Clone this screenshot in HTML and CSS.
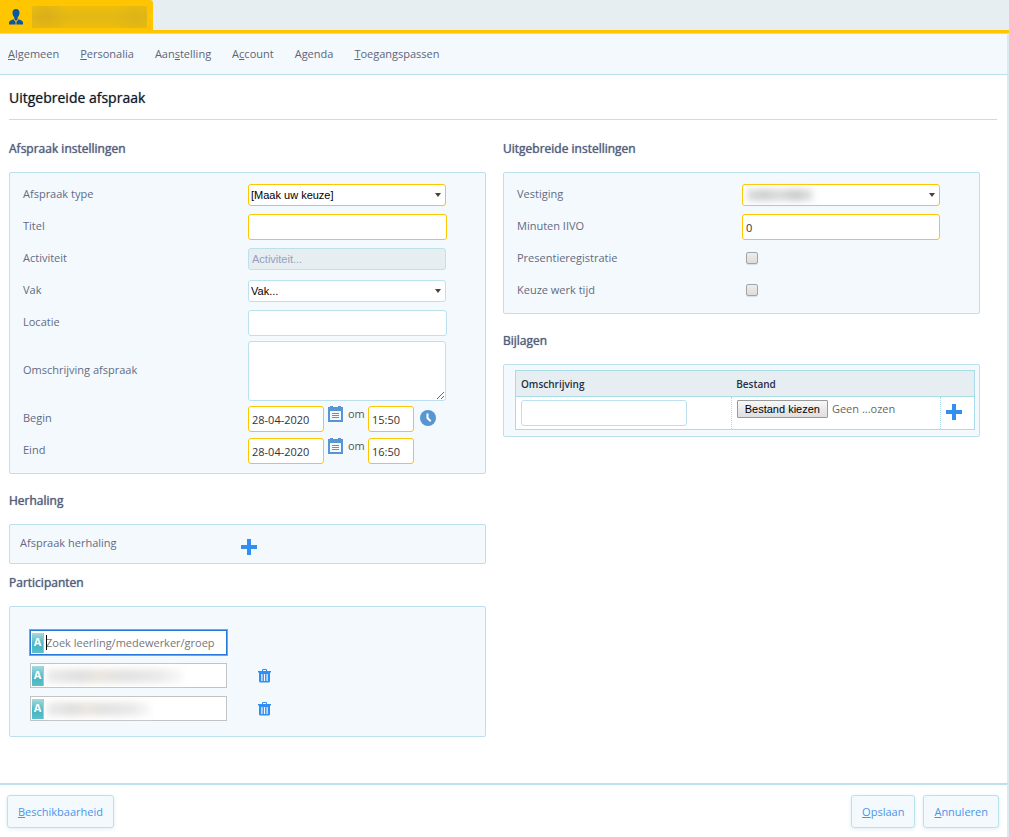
FILE: index.html
```html
<!DOCTYPE html>
<html lang="nl">
<head>
<meta charset="utf-8">
<title>Uitgebreide afspraak</title>
<link rel="stylesheet" href="styles.css">
</head>
<body>
<svg class="defs" aria-hidden="true">
  <symbol id="calendar" viewBox="0 0 15 16"><path fill-rule="evenodd" d="M0 1h2V0h3v1h5V0h3v1h2v15H0zM2 5v9h11V5z"/><path d="M4 7h7v1H4zM4 9h7v1H4zM4 11h7v1H4z"/></symbol>
  <symbol id="plus" viewBox="0 0 16 16"><path d="M6 0h4v6h6v4h-6v6H6v-6H0V6h6z"/></symbol>
  <symbol id="trash" viewBox="0 0 13 14"><path fill-rule="evenodd" d="M4 2V1Q4 0 5 0h3q1 0 1 1v1h4v1.500h-1V12q0 1.500-1.500 1.500h-8Q1 13.500 1 12V3.500H0V2zM5 1v1h3V1zM3.300 5v7h1.200V5zM5.900 5v7h1.200V5zM8.500 5v7h1.200V5z"/></symbol>
</svg>
<div class="page">
  <header class="tabs">
    <div class="tab">
      <svg class="person" viewBox="0 0 14 16"><path d="M7 0c2.300 0 3.500 1.600 3.500 3.800C10.500 6 9.600 7.300 8.700 8.300V10L7 12 5.300 10V8.300C4.400 7.300 3.500 6 3.500 3.800 3.500 1.600 4.700 0 7 0zM4.500 10.200L6.600 13v2.500H0v-1.700q0-1.800 2-2.500zM9.500 10.200L7.400 13v2.500H14v-1.700q0-1.800-2-2.500z"/></svg>
      <span class="tab-name"></span>
    </div>
  </header>
  <nav class="menu">
    <a href="#"><u>A</u>lgemeen</a>
    <a href="#"><u>P</u>ersonalia</a>
    <a href="#">Aan<u>s</u>telling</a>
    <a href="#">A<u>c</u>count</a>
    <a href="#">Agenda</a>
    <a href="#"><u>T</u>oegangspassen</a>
  </nav>
  <main class="content">
    <h1 class="title">Uitgebreide afspraak</h1>
    <div class="columns">
      <div class="column">
        <h2 class="heading">Afspraak instellingen</h2>
        <section class="panel form">
          <div class="row"><label for="type">Afspraak type</label><div class="select required"><select id="type"><option>[Maak uw keuze]</option></select></div></div>
          <div class="row"><label for="titel">Titel</label><input class="text required" id="titel" type="text"></div>
          <div class="row"><label for="act">Activiteit</label><input class="text short" id="act" type="text" placeholder="Activiteit..." disabled></div>
          <div class="row"><label for="vak">Vak</label><div class="select"><select id="vak"><option>Vak...</option></select></div></div>
          <div class="row"><label for="loc">Locatie</label><input class="text" id="loc" type="text"></div>
          <div class="row tall"><label for="oms">Omschrijving afspraak</label><textarea class="area" id="oms"></textarea></div>
          <div class="row"><label for="begin">Begin</label>
            <div class="moment"><input class="text required date" id="begin" type="text" value="28-04-2020"><svg class="calendar"><use href="#calendar"/></svg><span>om</span><input class="text required time" type="text" value="15:50" aria-label="Begintijd"><svg class="clock" viewBox="0 0 16 16"><circle cx="8" cy="8" r="8"/><path d="M7.500 3.500V8l3.200 3.200"/></svg></div></div>
          <div class="row"><label for="eind">Eind</label>
            <div class="moment"><input class="text required date" id="eind" type="text" value="28-04-2020"><svg class="calendar"><use href="#calendar"/></svg><span>om</span><input class="text required time" type="text" value="16:50" aria-label="Eindtijd"></div></div>
        </section>
        <h2 class="heading">Herhaling</h2>
        <section class="panel repeat"><span>Afspraak herhaling</span><button class="icon" type="button" aria-label="Herhaling toevoegen"><svg class="plus"><use href="#plus"/></svg></button></section>
        <h2 class="heading near">Participanten</h2>
        <section class="panel people">
          <div class="person-row"><div class="search active"><span class="badge">A</span><i class="caret"></i><input type="text" placeholder="Zoek leerling/medewerker/groep" aria-label="Zoek participant"></div></div>
          <div class="person-row"><div class="search"><span class="badge">A</span><span class="smear"></span><input type="text" aria-label="Participant 1"></div><button class="icon" type="button" aria-label="Verwijderen"><svg class="trash"><use href="#trash"/></svg></button></div>
          <div class="person-row"><div class="search"><span class="badge">A</span><span class="smear brief"></span><input type="text" aria-label="Participant 2"></div><button class="icon" type="button" aria-label="Verwijderen"><svg class="trash"><use href="#trash"/></svg></button></div>
        </section>
      </div>
      <div class="column">
        <h2 class="heading">Uitgebreide instellingen</h2>
        <section class="panel form">
          <div class="row"><label for="vest">Vestiging</label><div class="select required"><span class="smear site"></span><select id="vest"><option></option></select></div></div>
          <div class="row"><label for="min">Minuten IIVO</label><input class="text short required" id="min" type="text" value="0"></div>
          <div class="row"><label for="pres">Presentieregistratie</label><input class="check" id="pres" type="checkbox"></div>
          <div class="row"><label for="keuze">Keuze werk tijd</label><input class="check" id="keuze" type="checkbox"></div>
        </section>
        <h2 class="heading">Bijlagen</h2>
        <section class="panel files">
          <table class="table">
            <colgroup><col class="c1"><col class="c2"><col class="c3"></colgroup>
            <thead><tr><th>Omschrijving</th><th colspan="2">Bestand</th></tr></thead>
            <tbody><tr>
              <td><input class="text describe" type="text" aria-label="Omschrijving bijlage"></td>
              <td><div class="file"><button class="choose" type="button">Bestand kiezen</button><span>Geen ...ozen</span></div></td>
              <td class="add"><button class="icon" type="button" aria-label="Bijlage toevoegen"><svg class="plus"><use href="#plus"/></svg></button></td>
            </tr></tbody>
          </table>
        </section>
      </div>
    </div>
  </main>
  <footer class="footer">
    <button class="action" type="button"><u>B</u>eschikbaarheid</button>
    <button class="action push" type="button"><u>O</u>pslaan</button>
    <button class="action" type="button"><u>A</u>nnuleren</button>
  </footer>
</div>
</body>
</html>
```
FILE: styles.css
```css
* { box-sizing: border-box; }
body { margin: 0; background: #fff; color: #626b83; font: 11px/16px "Open Sans", sans-serif; }
input, select, textarea, button { font: inherit; margin: 0; }
.defs { position: absolute; width: 0; height: 0; }
svg { flex: none; fill: #5796d2; }
.page { min-height: 100vh; display: flex; flex-direction: column; }

.tabs { height: 33px; background: #e6eef1; border-bottom: 3px solid #ffc600; }
.tab { width: 153px; height: 33px; display: flex; align-items: center; gap: 9px; padding-left: 9px; background: #ffc600; border-top-right-radius: 3px; }
.person { width: 14px; height: 16px; fill: #0b57a4; }
.tab-name { width: 115px; height: 22px; background: radial-gradient(circle at 12% 45%, #d2a91f99 0, transparent 22px), radial-gradient(circle at 90% 50%, #d8b01c99 0, transparent 22px), linear-gradient(#efbe0c, #e3b815 50%, #ecbd0d); }
.menu { height: 42px; display: flex; align-items: center; gap: 21px; padding-left: 8px; background: #f4f9fd; border: solid #bce1ec; border-width: 1px 2px 1px 0; border-right-color: #dbeaf1; }
.menu a { color: #5d6579; text-decoration: none; }

.content { flex: 1; padding: 0 10px 0 9px; border-right: 2px solid #dbeaf1; }
.title { margin: 0; padding: 13px 0 11px; border-bottom: 1px solid #bce1ec; color: #101828; font-size: 14px; line-height: 20px; font-weight: 400; text-shadow: 0 0 1px #10182899; }
.columns { display: grid; grid-template-columns: 1fr 1fr; }
.column { padding: 2px 17px 0 0; }
.heading { margin: 17px 0 13px; color: #555f7d; font-size: 12px; line-height: 20px; font-weight: 400; text-shadow: 0 0 1px #555f7d; }
.heading.near { margin-top: 9px; }
.panel { background: #f4f9fd; border: 1px solid #bce1ec; border-radius: 2px; }

.form { padding: 5px 13px 7px; }
.row { height: 32px; display: grid; grid-template-columns: 225px 1fr; align-items: center; padding-top: 2px; }
.row label { margin-top: -2px; }
.tall { height: 64px; }
.text { width: 199px; height: 26px; padding: 0 3px; background: #fff; border: 1px solid #bce1ec; border-radius: 3px; color: #333; outline: 0; }
.short { width: 198px; }
.text:disabled { height: 22px; background: #e6eef1; font-family: "Liberation Sans", sans-serif; }
.text:disabled::placeholder { color: #93a1bf; }
.select { position: relative; width: 198px; height: 22px; }
.select select { width: 100%; height: 100%; padding: 0 2px; appearance: none; background: #fff; border: 1px solid #bce1ec; border-radius: 3px; color: #000; font-family: "Liberation Sans", sans-serif; }
.select::after { content: ""; position: absolute; right: 5px; top: 9px; border: solid transparent; border-width: 4px 3px 0; border-top-color: #444; }
.text.required, .required select { border-color: #ffc600; }
.area { width: 198px; height: 60px; background: #fff; border: 1px solid #bce1ec; border-radius: 3px; }
.moment { height: 26px; display: flex; align-items: flex-start; }
.date { width: 76px; margin-right: 4px; }
.calendar { width: 15px; height: 16px; margin-right: 5px; }
.moment span { width: 20px; color: #555; }
.time { width: 46px; margin-right: 6px; }
.clock { width: 16px; height: 16px; margin-top: 4px; }
.clock path { fill: none; stroke: #fff; stroke-width: 2; }
.check { width: 12px; height: 12px; margin: -2px 0 0 4px; appearance: none; border: 1px solid #a5a5a5; border-radius: 2px; background: linear-gradient(#ededed, #dcdcdc); box-shadow: 0 1px 1px #ddd; }

.icon { display: block; padding: 0; background: none; border: 0; }
.icon svg { display: block; fill: #308ff0; }
.plus { width: 16px; height: 16px; }
.repeat { height: 40px; display: grid; grid-template-columns: 221px 1fr; padding: 10px; }
.repeat .icon { margin-top: 4px; }
.people { padding: 23px 20px 15px; }
.person-row { height: 25px; margin-bottom: 8px; display: flex; align-items: center; gap: 31px; }
.person-row:last-child { margin-bottom: 0; }
.search { position: relative; width: 197px; height: 25px; display: flex; padding: 2px 1px 1px; border: 1px solid #c3c3c3; background: #fff; }
.search.active { border-color: #2878dc; box-shadow: 0 0 0 1px #6ea6ea; }
.search input { flex: 1; min-width: 0; border: 0; outline: 0; padding: 0 2px; background: none; }
.search input::placeholder { color: #777; }
.badge { width: 12px; padding-top: 1px; background: linear-gradient(#a5dade, #45b5c3 60%, #5ebecb); border-right: 1px solid #bbb; color: #fff; font-weight: 700; text-align: center; }
.caret { position: absolute; left: 15px; top: 4px; width: 1px; height: 15px; background: #000; }
.smear { position: absolute; left: 16px; top: 5px; width: 136px; height: 14px; background: linear-gradient(90deg, #ececec, #e0e0e0 25%, #ebe7df 38%, #e3e3e3 55%, #e9e9e9 80%, #f9f9f9); filter: blur(3px); }
.brief { width: 104px; }
.site { left: 5px; top: 5px; width: 66px; height: 12px; background: linear-gradient(90deg, #dedede, #cfd1d1 25%, #dcdcdc 50%, #cbcdcd 75%, #e5e5e5); }
.trash { width: 13px; height: 14px; }

.files { padding: 5px 4px 6px 11px; }
.table { width: 100%; table-layout: fixed; border-collapse: collapse; background: #fff; border: 1px solid #a9dce8; }
.c1 { width: 47%; }
.c3 { width: 34px; }
.table th { height: 26px; padding: 0 5px; background: #e6eef1; border-bottom: 1px solid #a9dce8; color: #253044; font-size: 10px; font-weight: 600; text-align: left; }
.table td { height: 33px; padding: 3px 5px; vertical-align: top; }
.table td + td { border-left: 1px dotted #a9dce8; }
.describe { display: block; width: 166px; }
.file { display: flex; gap: 4px; color: #666; line-height: 18px; }
.choose { height: 18px; padding: 0 7px; border: 1px solid #999; border-radius: 1px; background: linear-gradient(#f7f7f7, #dedede); color: #000; font-family: "Liberation Sans", sans-serif; line-height: 16px; white-space: nowrap; }
.table .add { padding: 7px 0 0 5px; }

.footer { display: flex; gap: 8px; padding: 10px 8px 9px 7px; border-top: 2px solid #bce1ec; border-right: 2px solid #dbeaf1; }
.action { height: 33px; padding: 0 10px; background: #f4f9fd; border: 1px solid #bce1ec; border-radius: 3px; box-shadow: 0 1px 4px #dfedf3; color: #4e94e6; }
.push { margin-left: auto; }
```
